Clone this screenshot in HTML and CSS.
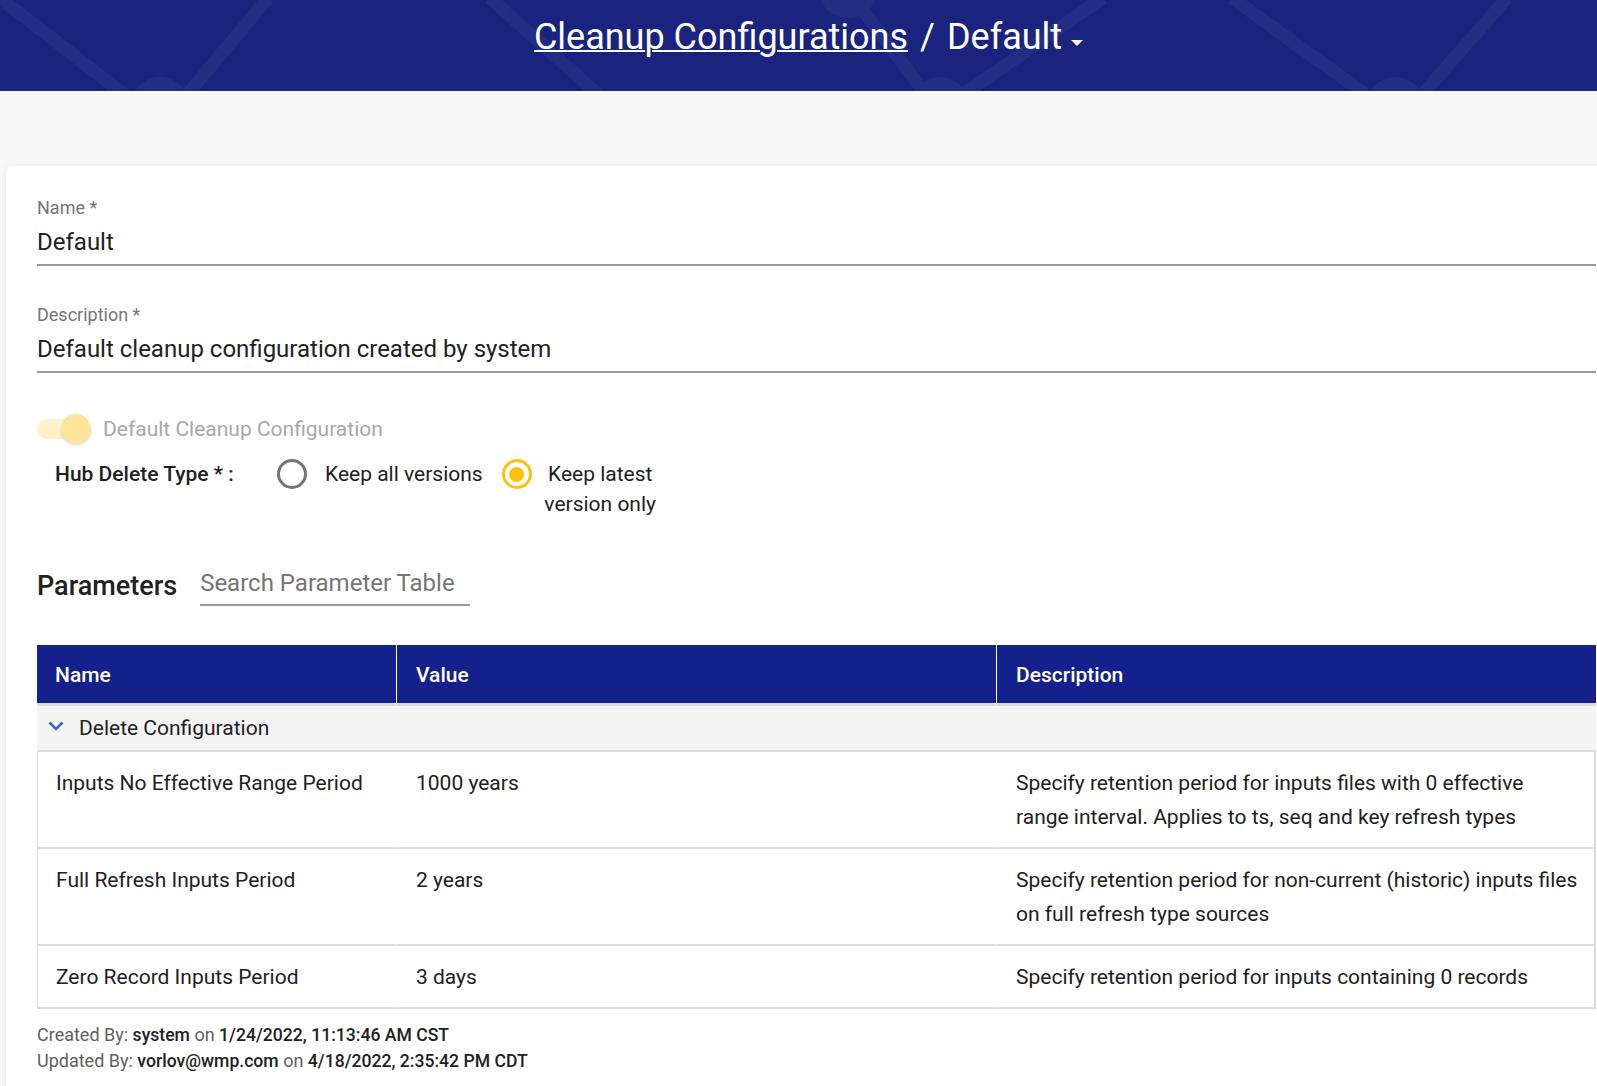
FILE: index.html
```html
<!DOCTYPE html>
<html lang="en">
<head>
<meta charset="utf-8">
<title>Cleanup Configurations / Default</title>
<link rel="stylesheet" href="styles.css">
</head>
<body>
<header class="topbar">
  <svg class="topbar-pattern" width="1597" height="91" viewBox="0 0 1597 91" aria-hidden="true">
    <g opacity="0.045">
      <g fill="none" stroke="#ffffff" stroke-width="13">
        <path d="M0 -2 L126 96"/>
        <path d="M268 -2 L186 96"/>
        <path d="M490 -2 L600 96"/>
        <path d="M848 -10 L930 100"/>
        <path d="M1103 -2 L955 100"/>
        <path d="M1232 -2 L1368 96"/>
        <path d="M1507 -2 L1421 96"/>
      </g>
      <g fill="#ffffff">
        <circle cx="160" cy="106" r="29"/>
        <circle cx="848" cy="-12" r="30"/>
        <circle cx="940" cy="106" r="29"/>
        <circle cx="1395" cy="106" r="29"/>
      </g>
    </g>
  </svg>
  <h1 class="crumbs">
    <a class="crumb-link" href="#">Cleanup Configurations</a>
    <span class="crumb-sep">/</span>
    <span class="crumb-current">Default</span>
    <span class="crumb-caret"></span>
  </h1>
</header>

<div class="subbar"></div>

<main class="card">
  <div class="field">
    <div class="field-label">Name *</div>
    <div class="field-value">Default</div>
  </div>
  <div class="field">
    <div class="field-label">Description *</div>
    <div class="field-value">Default cleanup configuration created by system</div>
  </div>

  <div class="toggle-row">
    <span class="switch"><span class="switch-track"></span><span class="switch-thumb"></span></span>
    <span class="toggle-label">Default Cleanup Configuration</span>
  </div>

  <div class="hub-row">
    <div class="hub-label">Hub Delete Type * :</div>
    <div class="radio-group">
      <label class="radio">
        <span class="radio-circle"></span>
        <span class="radio-text">Keep all versions</span>
      </label>
      <label class="radio radio-checked">
        <span class="radio-circle"><span class="radio-dot"></span></span>
        <span class="radio-text radio-text-wrap">Keep latest version only</span>
      </label>
    </div>
  </div>

  <div class="params-head">
    <h2 class="params-title">Parameters</h2>
    <div class="search">Search Parameter Table</div>
  </div>

  <table class="params-table">
    <colgroup>
      <col class="col-name">
      <col class="col-value">
      <col class="col-desc">
    </colgroup>
    <thead>
      <tr>
        <th>Name</th>
        <th>Value</th>
        <th>Description</th>
      </tr>
    </thead>
    <tbody>
      <tr class="group-row">
        <td colspan="3">
          <div class="group-cell">
            <svg class="chevron" width="16" height="10" viewBox="0 0 16 10" aria-hidden="true"><path d="M1.5 1.5 L8 8 L14.5 1.5" fill="none" stroke="#2f6cb3" stroke-width="2.6"/></svg>
            <span>Delete Configuration</span>
          </div>
        </td>
      </tr>
      <tr class="data-row">
        <td>Inputs No Effective Range Period</td>
        <td>1000 years</td>
        <td>Specify retention period for inputs files with 0 effective range interval. Applies to ts, seq and key refresh types</td>
      </tr>
      <tr class="data-row">
        <td>Full Refresh Inputs Period</td>
        <td>2 years</td>
        <td>Specify retention period for non-current (historic) inputs files on full refresh type sources</td>
      </tr>
      <tr class="data-row">
        <td>Zero Record Inputs Period</td>
        <td>3 days</td>
        <td>Specify retention period for inputs containing 0 records</td>
      </tr>
    </tbody>
  </table>

  <div class="audit">
    <div class="audit-line"><span class="audit-label">Created By:</span> <span class="audit-value">system</span> <span class="audit-label">on</span> <span class="audit-value">1/24/2022, 11:13:46 AM CST</span></div>
    <div class="audit-line"><span class="audit-label">Updated By:</span> <span class="audit-value">vorlov@wmp.com</span> <span class="audit-label">on</span> <span class="audit-value">4/18/2022, 2:35:42 PM CDT</span></div>
  </div>
</main>
</body>
</html>
```

FILE: styles.css
```css
* {
  box-sizing: border-box;
  margin: 0;
  padding: 0;
}

html, body {
  overflow: hidden;
}

body {
  width: 1597px;
  height: 1086px;
  font-family: Roboto, "Noto Sans", "Liberation Sans", Arial, sans-serif;
  background: #f8f8f8;
  color: #212121;
}

/* ---------- top bar ---------- */
.topbar {
  position: relative;
  height: 91px;
  background: #1a237e;
  overflow: hidden;
}

.topbar-pattern {
  position: absolute;
  left: 0;
  top: 0;
}

.crumbs {
  position: relative;
  display: flex;
  justify-content: center;
  align-items: center;
  padding-top: 16px;
  padding-left: 20px;
  height: 58px;
  font-size: 36px;
  line-height: 42px;
  font-weight: 400;
  color: #ffffff;
}

.crumb-link {
  color: #ffffff;
  text-decoration: underline;
  text-decoration-thickness: 2px;
}

.crumb-sep {
  margin: 0 12px;
}

.crumb-caret {
  width: 0;
  height: 0;
  margin-left: 9px;
  margin-top: 12px;
  border-left: 6px solid transparent;
  border-right: 6px solid transparent;
  border-top: 6px solid #ffffff;
}

.subbar {
  height: 75px;
}

/* ---------- card ---------- */
.card {
  display: block;
  width: 1621px;
  min-height: 1000px;
  margin-left: 6px;
  padding: 30px 31px 0;
  background: #ffffff;
  border-radius: 6px;
  box-shadow: 0 1px 4px rgba(0, 0, 0, 0.10);
}

.field {
  padding-bottom: 5px;
  border-bottom: 2px solid #9a9a9a;
}

.field + .field {
  margin-top: 37px;
}

.field-label {
  font-size: 18px;
  line-height: 24px;
  color: #757575;
}

.field-value {
  margin-top: 5px;
  font-size: 24px;
  line-height: 34px;
  color: #212121;
}

/* ---------- toggle ---------- */
.toggle-row {
  display: flex;
  align-items: center;
  gap: 12px;
  height: 30px;
  margin-top: 41px;
}

.switch {
  position: relative;
  width: 54px;
  height: 30px;
  flex: none;
}

.switch-track {
  position: absolute;
  left: 0;
  top: 5px;
  width: 54px;
  height: 20px;
  border-radius: 10px;
  background: #fff1c8;
}

.switch-thumb {
  position: absolute;
  right: 0;
  top: 0;
  width: 30px;
  height: 30px;
  border-radius: 50%;
  background: #ffe59a;
  box-shadow: 0 2px 2px rgba(0, 0, 0, 0.08), 0 1px 4px rgba(0, 0, 0, 0.06);
}

.toggle-label {
  font-size: 21px;
  line-height: 30px;
  color: #a8a8a8;
}

/* ---------- hub delete type ---------- */
.hub-row {
  display: flex;
  align-items: flex-start;
  margin-top: 15px;
  padding-left: 18px;
}

.hub-label {
  width: 222px;
  flex: none;
  font-size: 21px;
  line-height: 30px;
  font-weight: 500;
  color: #212121;
}

.radio-group {
  display: flex;
  align-items: flex-start;
  gap: 19px;
}

.radio {
  display: flex;
  align-items: flex-start;
  gap: 18px;
}

.radio-circle {
  display: flex;
  align-items: center;
  justify-content: center;
  width: 30px;
  height: 30px;
  flex: none;
  border: 3px solid #757575;
  border-radius: 50%;
}

.radio-checked .radio-circle {
  border-color: #ffc107;
}

.radio-dot {
  width: 15px;
  height: 15px;
  border-radius: 50%;
  background: #ffc107;
}

.radio-text {
  font-size: 21px;
  line-height: 30px;
  color: #212121;
}

.radio-text-wrap {
  width: 113px;
  margin-left: -6px;
  text-align: center;
}

/* ---------- parameters header ---------- */
.params-head {
  display: flex;
  align-items: center;
  gap: 23px;
  height: 41px;
  margin-top: 46px;
}

.params-title {
  font-size: 27px;
  line-height: 34px;
  font-weight: 500;
  color: #212121;
}

.search {
  width: 270px;
  height: 41px;
  padding-top: 1px;
  font-size: 24px;
  line-height: 34px;
  color: #757575;
  border-bottom: 2px solid #9a9a9a;
}

/* ---------- table ---------- */
.params-table {
  width: 1559px;
  margin-top: 39px;
  border-collapse: separate;
  border-spacing: 0;
  table-layout: fixed;
  font-size: 21px;
}

.col-name { width: 359px; }
.col-value { width: 600px; }
.col-desc { width: 600px; }

.params-table th {
  height: 61px;
  padding: 1px 18px 0 19px;
  background: #14218c;
  color: #ffffff;
  font-weight: 500;
  text-align: left;
  border-left: 1px solid #ffffff;
  border-bottom: 3px solid #dcdcdc;
}

.params-table th:first-child {
  padding-left: 18px;
  border-left: none;
}

.group-row td {
  height: 46px;
  padding: 0 0 0 11px;
  background: #f4f4f4;
  border-bottom: 2px solid #dcdcdc;
}

.group-cell {
  display: flex;
  align-items: center;
  gap: 15px;
  color: #212121;
}

.chevron {
  margin-top: -5px;
}

.data-row td {
  vertical-align: top;
  padding: 14px 18px 13px 19px;
  line-height: 34px;
  color: #212121;
  border-left: 1px solid transparent;
  border-bottom: 2px solid #dcdcdc;
}

.data-row td:first-child {
  padding-left: 18px;
  border-left: 1px solid #dcdcdc;
}

.data-row td:last-child {
  padding-right: 16px;
  border-right: 2px solid #dcdcdc;
}

/* ---------- audit ---------- */
.audit {
  margin-top: 13px;
  font-size: 18px;
  line-height: 25px;
}

.audit-label {
  color: #5f5f5f;
}

.audit-value {
  color: #212121;
  font-weight: 500;
  font-size: 17.6px;
}
```
